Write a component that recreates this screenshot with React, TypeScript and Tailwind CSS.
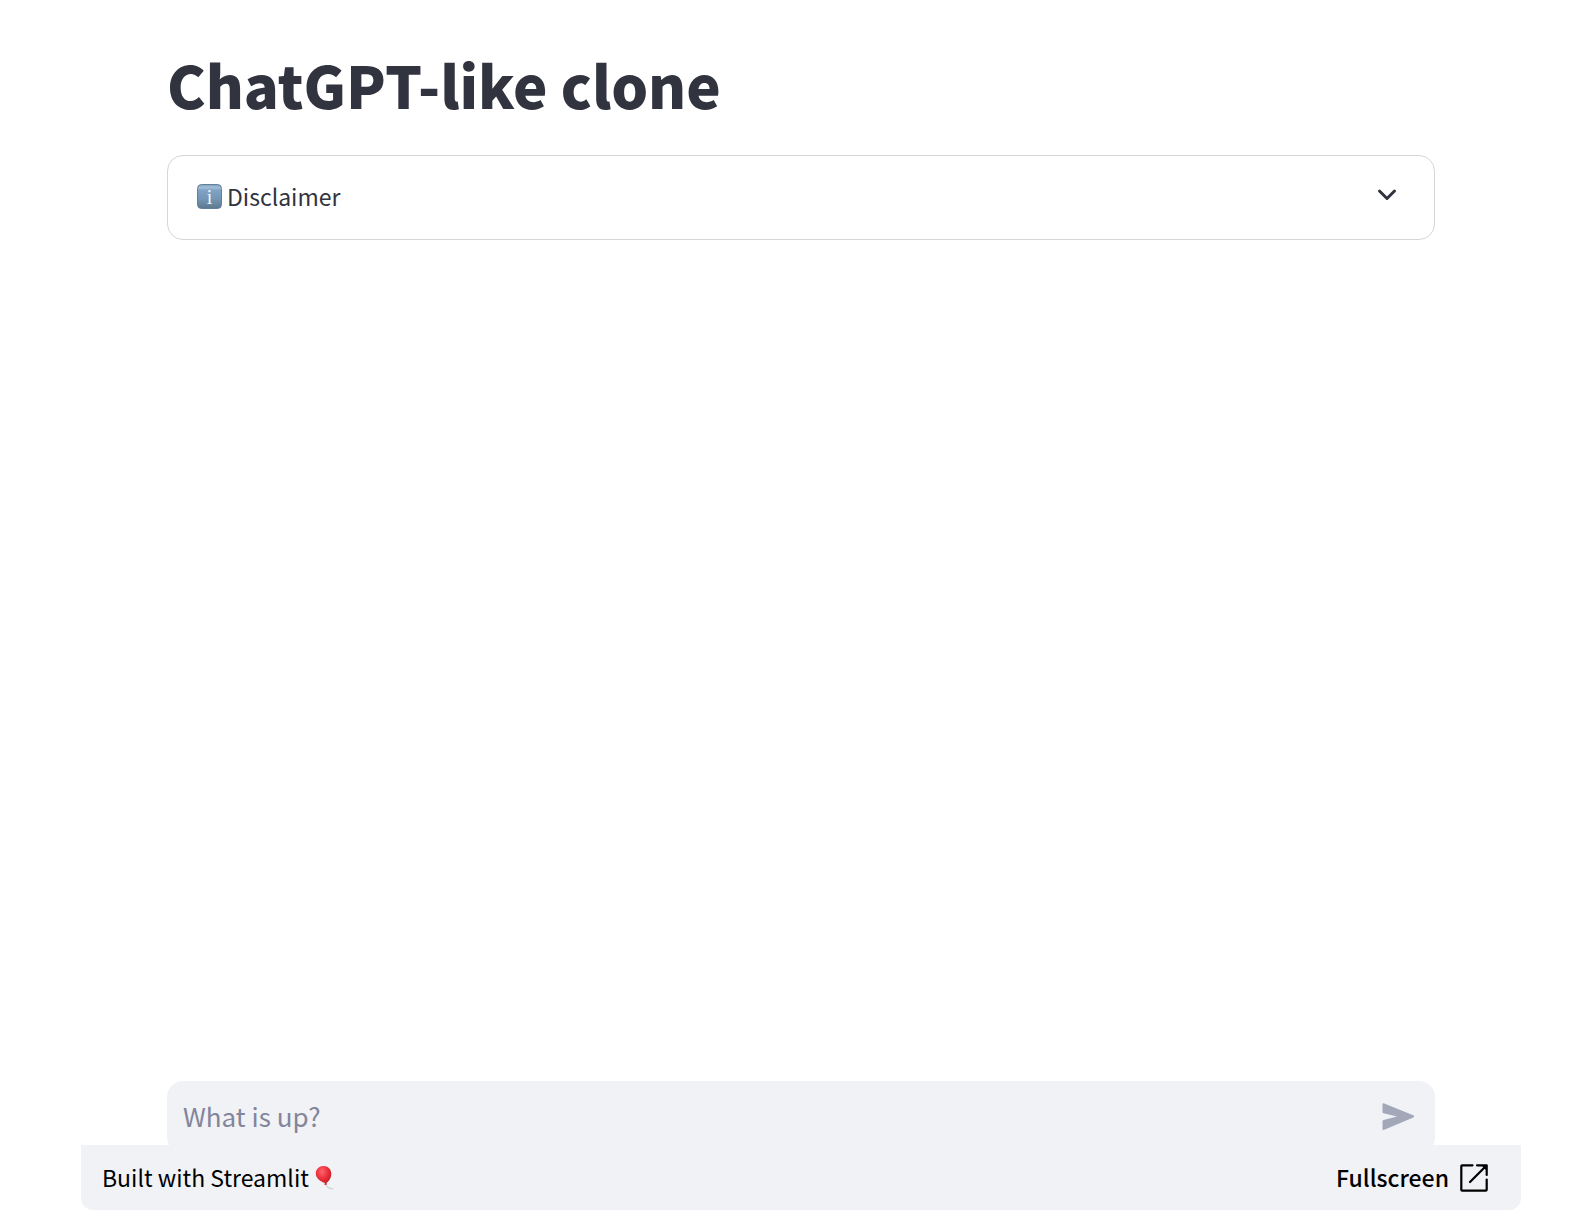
import { useState } from 'react';

function InfoIcon() {
  return (
    <svg width="25" height="25" viewBox="0 0 25 25" aria-hidden="true" className="shrink-0">
      <defs>
        <linearGradient id="info-face" x1="0" y1="0" x2="0" y2="1">
          <stop offset="0" stopColor="#7f9fbd" />
          <stop offset="0.12" stopColor="#a3bdd6" />
          <stop offset="0.25" stopColor="#7fa3c6" />
          <stop offset="0.6" stopColor="#7496b4" />
          <stop offset="1" stopColor="#5d7890" />
        </linearGradient>
      </defs>
      <rect x="0.5" y="0.5" width="24" height="24" rx="4" fill="url(#info-face)" stroke="#607f9b" />
      <text
        x="12.5"
        y="20"
        textAnchor="middle"
        fontSize="20"
        fill="#f2f7fb"
        className="font-['Liberation_Serif',serif]"
      >
        i
      </text>
    </svg>
  );
}

function BalloonIcon() {
  return (
    <svg width="20" height="26" viewBox="0 0 20 26" aria-hidden="true" className="shrink-0">
      <defs>
        <radialGradient id="balloon" cx="0.4" cy="0.3" r="0.75">
          <stop offset="0" stopColor="#ff6570" />
          <stop offset="0.45" stopColor="#ee3440" />
          <stop offset="1" stopColor="#bd1522" />
        </radialGradient>
      </defs>
      <path d="M11 19.5c1 2.500 3.500 4.500 7.500 4.500" fill="none" stroke="#d0d0d2" strokeWidth="1.200" />
      <path
        d="M8.500 1C4 1 .8 4.300.8 8.600c0 4.600 4.600 8.200 9.200 9.500l-.7 1.900 2.700-.4-.6-1.600C14.500 15.800 16.300 12.500 16.300 9 16.300 4.200 13 1 8.500 1z"
        fill="url(#balloon)"
      />
    </svg>
  );
}

function SendIcon() {
  return (
    <svg width="32" height="28" viewBox="0 0 32 28" fill="currentColor" aria-hidden="true">
      <path d="M0.500 1.500v7.600c0 .6.400 1 1 1.200L15 13.500 1.500 17c-.6.200-1 .7-1 1.200v7.500c0 1 .9 1.500 1.800 1.100l29-12.200c1-.4 1-1.900 0-2.300L2.300.400C1.400 0 .5.600.5 1.500z" />
    </svg>
  );
}

function FullscreenIcon() {
  return (
    <svg
      width="28"
      height="28"
      viewBox="0 0 28 28"
      fill="none"
      stroke="currentColor"
      strokeWidth="2.2"
      strokeLinecap="round"
      strokeLinejoin="round"
      aria-hidden="true"
    >
      <path d="M12.500 1.300H2.300a1 1 0 0 0-1 1v23.400a1 1 0 0 0 1 1h23.400a1 1 0 0 0 1-1V15.500" />
      <path d="M17 1.300h9.700V11M26 2 10 18" />
      <path d="M21.500 1.500h5v5z" fill="currentColor" stroke="none" />
    </svg>
  );
}

export default function App() {
  const [message, setMessage] = useState('');

  return (
    <div className="flex min-h-screen flex-col bg-white pr-[73px] pb-[22px] pl-[81px] font-['Noto_Sans_CJK_JP','Noto_Sans',sans-serif] text-[#31333f]">
      {/* Main content */}
      <main className="flex grow flex-col px-[86px] pt-11">
        <h1 className="text-[58px] leading-[80px] font-black">ChatGPT-like clone</h1>

        <button
          type="button"
          aria-expanded="false"
          className="mt-[31px] flex h-[85px] w-full items-center rounded-2xl border border-[#d6d6d9] pr-[35px] pb-[3px] pl-[29px] text-left"
        >
          <InfoIcon />
          <span className="ml-[5px] grow text-[23px]">Disclaimer</span>
          <svg
            width="24"
            height="24"
            viewBox="0 0 24 24"
            fill="none"
            stroke="currentColor"
            strokeWidth="3"
            strokeLinecap="round"
            strokeLinejoin="round"
            aria-hidden="true"
          >
            <path d="m4.500 7 7.500 7.500L19.500 7" />
          </svg>
        </button>

        {/* Chat input */}
        <form
          onSubmit={(e) => e.preventDefault()}
          className="mt-auto flex h-[72px] items-center rounded-2xl bg-[#f0f2f6] pr-[21px] pl-4"
        >
          <input
            type="text"
            aria-label="What is up?"
            placeholder="What is up?"
            value={message}
            onChange={(e) => setMessage(e.target.value)}
            className="min-w-0 grow bg-transparent pb-1 text-[26px] outline-none placeholder:text-[#83859a]"
          />
          <button type="submit" aria-label="Send" className="text-[#a3a8b8]">
            <SendIcon />
          </button>
        </form>
      </main>

      {/* Embed footer, overlaps the bottom edge of the chat input */}
      <footer className="z-10 -mt-2 flex h-[65px] items-center justify-between rounded-b-xl bg-[#f0f2f6] pr-[33px] pl-[21px] text-[23px] text-black">
        <a href="#streamlit" className="flex items-center gap-[6px]">
          Built with Streamlit
          <BalloonIcon />
        </a>
        <a href="#fullscreen" className="flex items-center gap-[11px] font-medium">
          Fullscreen
          <FullscreenIcon />
        </a>
      </footer>
    </div>
  );
}
